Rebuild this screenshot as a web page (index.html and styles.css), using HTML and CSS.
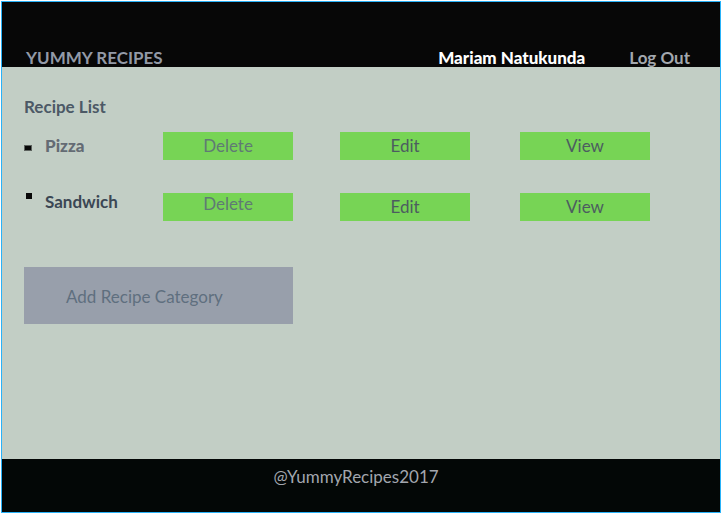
FILE: index.html
```html
<!DOCTYPE html>
<html lang="en">
<head>
<meta charset="utf-8">
<title>Yummy Recipes</title>
<link rel="stylesheet" href="styles.css">
</head>
<body>
<div class="page">
  <header class="header">
    <a class="brand" href="#">YUMMY RECIPES</a>
    <nav class="account">
      <a class="user" href="#">Mariam Natukunda</a>
      <a class="logout" href="#">Log Out</a>
    </nav>
  </header>
  <main class="main">
    <h1 class="title">Recipe List</h1>
    <ul class="recipes">
      <li class="recipe">
        <span class="name name-strong"><span class="bullet bullet-wide"></span>Pizza</span>
        <button class="action muted" type="button">Delete</button>
        <button class="action" type="button">Edit</button>
        <button class="action" type="button">View</button>
      </li>
      <li class="recipe">
        <span class="name name-raised"><span class="bullet bullet-raised"></span>Sandwich</span>
        <button class="action muted action-raised" type="button">Delete</button>
        <button class="action" type="button">Edit</button>
        <button class="action" type="button">View</button>
      </li>
    </ul>
    <button class="add" type="button">Add Recipe Category</button>
  </main>
  <footer class="footer">@YummyRecipes2017</footer>
</div>
</body>
</html>
```
FILE: styles.css
```css
* {
  box-sizing: border-box;
}

body {
  margin: 0;
  padding: 1px 1px 0;
  background: #fff;
  font: 17px/20px Lato, sans-serif;
}

.page {
  display: flex;
  flex-direction: column;
  min-height: calc(100vh - 1px);
  border: 1px solid #29b2f8;
  background: #c2cec5;
}

.header {
  display: flex;
  justify-content: space-between;
  padding: 47px 30px 0 24px;
  background: #070707;
  font-weight: 700;
  line-height: 18px;
}

.header a {
  text-decoration: none;
}

.brand {
  color: #9299a6;
}

.account {
  display: flex;
  gap: 44px;
}

.user {
  color: #fff;
  font-weight: 900;
}

.logout {
  color: #a3a8ae;
}

.main {
  flex: 1;
  padding: 30px 0 30px 22px;
}

.title {
  margin: 0;
  color: #4c5966;
  font-size: 17px;
  font-weight: 700;
}

.recipes {
  display: grid;
  gap: 33px;
  margin: 15px 0 46px;
  padding: 0;
  list-style: none;
}

.recipe {
  display: grid;
  grid-template-columns: 139fr 177fr 180fr 200fr;
}

.name {
  display: flex;
  align-items: center;
  color: #646b74;
  font-weight: 700;
  line-height: 18px;
}

.name-strong {
  font-weight: 900;
}

.name-raised {
  padding-bottom: 10px;
  color: #3b4754;
}

.bullet {
  width: 6px;
  height: 6px;
  margin: 0 13px 0 2px;
  background: #080808;
}

.bullet-wide {
  width: 8px;
  margin: 4px 13px 0 0;
  border: 1px solid #5c625e;
}

.bullet-raised {
  margin-bottom: 12px;
}

.action,
.add {
  border: 0;
  font: inherit;
  cursor: pointer;
}

.action {
  width: 130px;
  height: 28px;
  padding: 0;
  background: #77d455;
  color: #4c5d60;
}

.muted {
  color: #5f7a74;
}

.action-raised {
  padding-bottom: 6px;
}

.add {
  display: block;
  width: 269px;
  height: 57px;
  padding: 2px 0 0 42px;
  background: #989fab;
  color: #5f6f7f;
  text-align: left;
}

.footer {
  padding: 8px 10px 25px 0;
  background: #030706;
  color: #a2a6ae;
  text-align: center;
}
```
